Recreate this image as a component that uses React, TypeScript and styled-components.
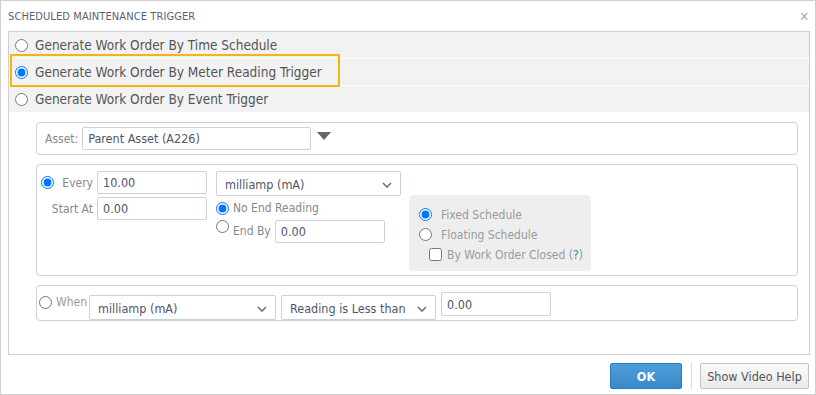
import styled, { createGlobalStyle } from "styled-components";

const GlobalStyle = createGlobalStyle`
  html, body {
    margin: 0;
    padding: 0;
    background: #fff;
  }
  body {
    font-family: "DejaVu Sans Condensed", "DejaVu Sans", sans-serif;
    font-stretch: condensed;
    color: #555;
  }
`;

const Dialog = styled.div`
  width: 816px;
  height: 395px;
  box-sizing: border-box;
  border: 1px solid #cfcfcf;
  display: flex;
  flex-direction: column;
  background: #fff;
`;

const Header = styled.div`
  height: 30px;
  display: flex;
  align-items: center;
  justify-content: space-between;
  padding: 0 6px 0 7px;
`;

const Title = styled.div`
  font-size: 11px;
  color: #5a5f73;
  letter-spacing: 0.1px;
`;

const Close = styled.div`
  font-size: 13px;
  color: #aaa;
  line-height: 1;
`;

const Panel = styled.div`
  margin: 0 5px 0 7px;
  height: 324px;
  box-sizing: border-box;
  border: 1px solid #cfcfcf;
  display: flex;
  flex-direction: column;
`;

const ModeRow = styled.label`
  position: relative;
  height: 26px;
  background: #f2f2f2;
  display: flex;
  align-items: center;
  padding-left: 6px;
  gap: 7px;
  font-size: 13.5px;
  color: #555;
  & + & {
    border-top: 1px solid #fff;
  }
`;

const Highlight = styled.div`
  position: absolute;
  z-index: 2;
  left: 1px;
  top: -5px;
  width: 330px;
  height: 33px;
  box-sizing: border-box;
  border: 2px solid #f5b510;
  border-radius: 1px;
  pointer-events: none;
`;

const Radio = styled.input.attrs({ type: "radio" })`
  margin: 0;
  width: 13px;
  height: 13px;
  flex: none;
`;

const Check = styled.input.attrs({ type: "checkbox" })`
  margin: 0;
  width: 13px;
  height: 13px;
  flex: none;
`;

const Body = styled.div`
  padding: 10px 11px 0 27px;
  display: flex;
  flex-direction: column;
  gap: 9px;
`;

const Box = styled.div<{ $h: number }>`
  height: ${(p) => p.$h}px;
  box-sizing: border-box;
  border: 1px solid #cdd0d6;
  border-radius: 4px;
  display: flex;
`;

const AssetBox = styled(Box)`
  align-items: center;
  padding-left: 8px;
  gap: 4px;
`;

const Label = styled.span<{ $muted?: boolean }>`
  font-size: 12px;
  color: ${(p) => (p.$muted ? "#9a9a9a" : "#888")};
  white-space: nowrap;
`;

const TextBox = styled.div<{ $w: number; $h?: number }>`
  width: ${(p) => p.$w}px;
  height: ${(p) => p.$h ?? 23}px;
  box-sizing: border-box;
  border: 1px solid #cdd0d6;
  border-radius: 2px;
  background: #fff;
  display: flex;
  align-items: center;
  padding-left: 5px;
  font-size: 12.5px;
  color: #4f566b;
  flex: none;
`;

const Caret = styled.div`
  width: 0;
  height: 0;
  margin-left: 2px;
  margin-top: -6px;
  border-left: 7px solid transparent;
  border-right: 7px solid transparent;
  border-top: 8px solid #666;
`;

const SelectBox = styled.div<{ $w: number }>`
  width: ${(p) => p.$w}px;
  height: 25px;
  box-sizing: border-box;
  border: 1px solid #cdd0d6;
  border-radius: 2px;
  background: #fff;
  display: flex;
  align-items: center;
  justify-content: space-between;
  padding: 2px 8px 0 8px;
  font-size: 12.5px;
  color: #4f566b;
  flex: none;
`;

const EveryBox = styled(Box)`
  padding: 6px 0 4px 4px;
  align-items: flex-start;
`;

const LeftGrid = styled.div`
  display: grid;
  grid-template-columns: 52px 110px;
  column-gap: 4px;
  row-gap: 3px;
  align-items: center;
`;

const LabelCell = styled.div`
  display: flex;
  align-items: center;
  justify-content: space-between;
`;

const RightLabel = styled(Label)`
  justify-self: end;
`;

const MidCol = styled.div`
  margin-left: 9px;
  display: flex;
  flex-direction: column;
`;

const Option = styled.label`
  display: flex;
  align-items: center;
  gap: 4px;
`;

const NoEnd = styled(Option)`
  margin-top: 5px;
  height: 14px;
`;

const EndBy = styled(Option)`
  margin-top: 5px;
  align-items: flex-start;
  span {
    margin-top: 4px;
  }
`;

const ScheduleBox = styled.div`
  align-self: flex-end;
  margin-left: 8px;
  width: 182px;
  height: 76px;
  box-sizing: border-box;
  background: #eeeeee;
  border-radius: 4px;
  padding: 13px 0 0 10px;
  display: flex;
  flex-direction: column;
  gap: 7px;
`;

const SchedOption = styled.label<{ $indent?: number }>`
  display: flex;
  align-items: center;
  gap: ${(p) => (p.$indent ? 5 : 9)}px;
  margin-left: ${(p) => p.$indent ?? 0}px;
  height: 13px;
`;

const Help = styled.span`
  color: #2a86c0;
`;

const WhenBox = styled(Box)`
  align-items: flex-start;
  padding: 9px 0 0 2px;
`;

const WhenLabel = styled.label`
  display: flex;
  align-items: center;
  gap: 4px;
  margin-right: 2px;
`;

const Gap = styled.div<{ $w: number }>`
  width: ${(p) => p.$w}px;
  flex: none;
`;

const Footer = styled.div`
  flex: 1;
  display: flex;
  justify-content: flex-end;
  align-items: flex-start;
  padding: 8px 6px 0 0;
`;

const Button = styled.button<{ $primary?: boolean; $w: number }>`
  width: ${(p) => p.$w}px;
  height: 26px;
  box-sizing: border-box;
  border-radius: 2px;
  font-family: inherit;
  font-stretch: condensed;
  font-size: 12.5px;
  padding: 0;
  border: 1px solid ${(p) => (p.$primary ? "#2f79b8" : "#c3c3c3")};
  background: ${(p) =>
    p.$primary
      ? "linear-gradient(#4d9fdb, #3a88c9)"
      : "linear-gradient(#fafafa, #e9e9e9)"};
  color: ${(p) => (p.$primary ? "#fff" : "#555")};
  font-weight: ${(p) => (p.$primary ? "bold" : "normal")};
`;

const Divider = styled.div`
  width: 1px;
  height: 26px;
  background: #dcdcdc;
  margin: 0 8px 0 9px;
`;

function Chevron() {
  return (
    <svg width="10" height="6" viewBox="0 0 10 6">
      <path d="M1 1 L5 5 L9 1" fill="none" stroke="#6b7280" strokeWidth="1.6" />
    </svg>
  );
}

export default function App() {
  return (
    <>
      <GlobalStyle />
      <Dialog>
        <Header>
          <Title>SCHEDULED MAINTENANCE TRIGGER</Title>
          <Close>✕</Close>
        </Header>
        <Panel>
          <ModeRow>
            <Radio name="mode" />
            Generate Work Order By Time Schedule
          </ModeRow>
          <ModeRow>
            <Radio name="mode" defaultChecked />
            Generate Work Order By Meter Reading Trigger
            <Highlight />
          </ModeRow>
          <ModeRow>
            <Radio name="mode" />
            Generate Work Order By Event Trigger
          </ModeRow>
          <Body>
            <AssetBox $h={33}>
              <Label>Asset:</Label>
              <TextBox $w={229} $h={23}>Parent Asset (A226)</TextBox>
              <Caret />
            </AssetBox>
            <EveryBox $h={112}>
              <LeftGrid>
                <LabelCell>
                  <Radio name="kind" defaultChecked />
                  <Label>Every</Label>
                </LabelCell>
                <TextBox $w={110}>10.00</TextBox>
                <RightLabel>Start At</RightLabel>
                <TextBox $w={110}>0.00</TextBox>
              </LeftGrid>
              <MidCol>
                <SelectBox $w={185}>
                  milliamp (mA)
                  <Chevron />
                </SelectBox>
                <NoEnd>
                  <Radio name="end" defaultChecked />
                  <Label>No End Reading</Label>
                </NoEnd>
                <EndBy>
                  <Radio name="end" />
                  <Label>End By</Label>
                  <TextBox $w={110}>0.00</TextBox>
                </EndBy>
              </MidCol>
              <ScheduleBox>
                <SchedOption>
                  <Radio name="sched" defaultChecked />
                  <Label $muted>Fixed Schedule</Label>
                </SchedOption>
                <SchedOption>
                  <Radio name="sched" />
                  <Label $muted>Floating Schedule</Label>
                </SchedOption>
                <SchedOption $indent={10}>
                  <Check />
                  <Label $muted>
                    By Work Order Closed (<Help>?</Help>)
                  </Label>
                </SchedOption>
              </ScheduleBox>
            </EveryBox>
            <WhenBox $h={36}>
              <WhenLabel>
                <Radio name="kind" />
                <Label $muted>When</Label>
              </WhenLabel>
              <SelectBox $w={187}>
                milliamp (mA)
                <Chevron />
              </SelectBox>
              <Gap $w={5} />
              <SelectBox $w={155}>
                Reading is Less than
                <Chevron />
              </SelectBox>
              <Gap $w={5} />
              <TextBox $w={110} $h={24} style={{ marginTop: -3 }}>
                0.00
              </TextBox>
            </WhenBox>
          </Body>
        </Panel>
        <Footer>
          <Button $primary $w={72}>
            OK
          </Button>
          <Divider />
          <Button $w={109}>Show Video Help</Button>
        </Footer>
      </Dialog>
    </>
  );
}
